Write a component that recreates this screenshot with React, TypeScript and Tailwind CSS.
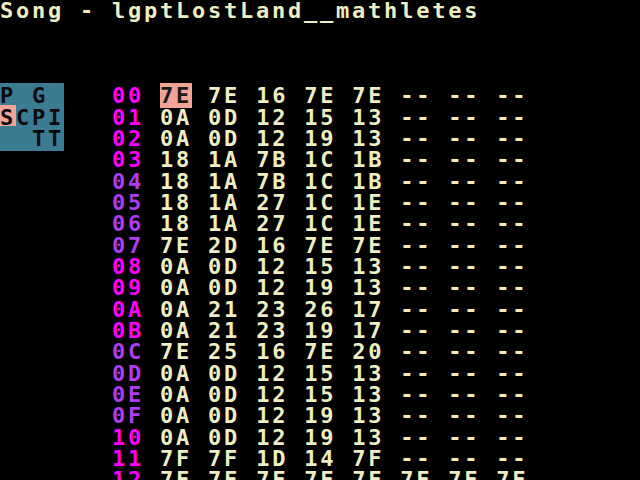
import React from 'react';

const rows: string[][] = [
  ['7E', '7E', '16', '7E', '7E', '--', '--', '--'],
  ['0A', '0D', '12', '15', '13', '--', '--', '--'],
  ['0A', '0D', '12', '19', '13', '--', '--', '--'],
  ['18', '1A', '7B', '1C', '1B', '--', '--', '--'],
  ['18', '1A', '7B', '1C', '1B', '--', '--', '--'],
  ['18', '1A', '27', '1C', '1E', '--', '--', '--'],
  ['18', '1A', '27', '1C', '1E', '--', '--', '--'],
  ['7E', '2D', '16', '7E', '7E', '--', '--', '--'],
  ['0A', '0D', '12', '15', '13', '--', '--', '--'],
  ['0A', '0D', '12', '19', '13', '--', '--', '--'],
  ['0A', '21', '23', '26', '17', '--', '--', '--'],
  ['0A', '21', '23', '19', '17', '--', '--', '--'],
  ['7E', '25', '16', '7E', '20', '--', '--', '--'],
  ['0A', '0D', '12', '15', '13', '--', '--', '--'],
  ['0A', '0D', '12', '15', '13', '--', '--', '--'],
  ['0A', '0D', '12', '19', '13', '--', '--', '--'],
  ['0A', '0D', '12', '19', '13', '--', '--', '--'],
  ['7F', '7F', '1D', '14', '7F', '--', '--', '--'],
  ['7F', '7F', '7F', '7F', '7F', '7F', '7F', '7F'],
];

// left side mini map (chain/phrase/instrument/table etc.)
const MapCell: React.FC<{ line: number }> = ({ line }) => {
  if (line === 0)
    return <span className="bg-[#3b7c92] text-[#0a0a0a]">{'P G '}</span>;
  if (line === 1)
    return (
      <span className="bg-[#3b7c92] text-[#0a0a0a]">
        <span className="bg-[#f2a497]">S</span>
        {'CPI'}
      </span>
    );
  if (line === 2)
    return <span className="bg-[#3b7c92] text-[#0a0a0a]">{'  TT'}</span>;
  return <span>{'    '}</span>;
};

const Line: React.FC<{ children?: React.ReactNode }> = ({ children }) => (
  <div className="h-[21.333px] leading-[21.333px] whitespace-pre">{children}</div>
);

export default function App() {
  return (
    <div className="w-[640px] h-[480px] bg-black overflow-hidden text-[#eeeec2] font-['DejaVu_Sans_Mono',monospace] font-bold text-[22px] tracking-[2.76px]">
      <Line>Song - lgptLostLand__mathletes</Line>
      <Line />
      <Line />
      <Line />
      {rows.map((cells, i) => {
        const purple = Math.floor(i / 4) % 2 === 1;
        const num = i.toString(16).toUpperCase().padStart(2, '0');
        return (
          <Line key={i}>
            <MapCell line={i} />
            {'   '}
            <span className={purple ? 'text-[#b03cf4]' : 'text-[#ff00ff]'}>{num}</span>
            {cells.map((c, j) => (
              <React.Fragment key={j}>
                {' '}
                {i === 0 && j === 0 ? (
                  <span className="bg-[#f2a497] text-[#1a1a1a]">{c}</span>
                ) : (
                  <span>{c}</span>
                )}
              </React.Fragment>
            ))}
          </Line>
        );
      })}
    </div>
  );
}
